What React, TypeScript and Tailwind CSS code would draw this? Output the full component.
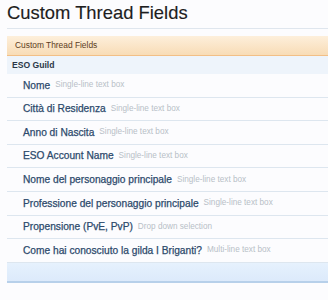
const fields = [
  { name: "Nome", type: "Single-line text box" },
  { name: "Città di Residenza", type: "Single-line text box" },
  { name: "Anno di Nascita", type: "Single-line text box" },
  { name: "ESO Account Name", type: "Single-line text box" },
  { name: "Nome del personaggio principale", type: "Single-line text box" },
  { name: "Professione del personaggio principale", type: "Single-line text box" },
  { name: "Propensione (PvE, PvP)", type: "Drop down selection" },
  { name: "Come hai conosciuto la gilda I Briganti?", type: "Multi-line text box" },
];

export default function App() {
  return (
    <div className="min-h-[300px] w-[328px] overflow-hidden bg-[#fcfcfe] font-['Liberation_Sans',Arial,sans-serif]">
      {/* page title */}
      <div className="pl-[7px]">
        <h1 className="h-[28px] pt-[2px] text-[18.4px] leading-[22px] text-[#1e1e1e] [-webkit-text-stroke:0.15px_#1e1e1e]">
          Custom Thread Fields
        </h1>
        <div className="h-px bg-[#dfe6ee]" />
      </div>

      <div className="mt-[7px] pl-[7px]">
        {/* section header */}
        <div className="flex h-[20px] items-center border-b border-[#f2bf86] bg-gradient-to-b from-[#fdefdb] to-[#f8dcb6] pl-[8px] text-[8.4px] text-[#5b3d1e]">
          Custom Thread Fields
        </div>

        {/* group */}
        <div className="flex h-[18px] items-center bg-[#eef4fb] pl-[5px] text-[8.6px] font-bold text-[#2b3847]">
          ESO Guild
        </div>

        {fields.map((f) => (
          <div
            key={f.name}
            className="flex h-[23.6px] items-center border-b border-[#dde6ef] pl-[16px]"
          >
            <span className="text-[10.2px] text-[#2c4a6c] [-webkit-text-stroke:0.25px_#2c4a6c]">
              {f.name}
            </span>
            <span className="ml-[5px] text-[8.2px] text-[#b8bfc7]">{f.type}</span>
          </div>
        ))}

        {/* footer */}
        <div className="h-[20px] border-b-2 border-[#b7d0ea] bg-gradient-to-b from-[#e6f1fd] to-[#dceafb]" />
      </div>
    </div>
  );
}
